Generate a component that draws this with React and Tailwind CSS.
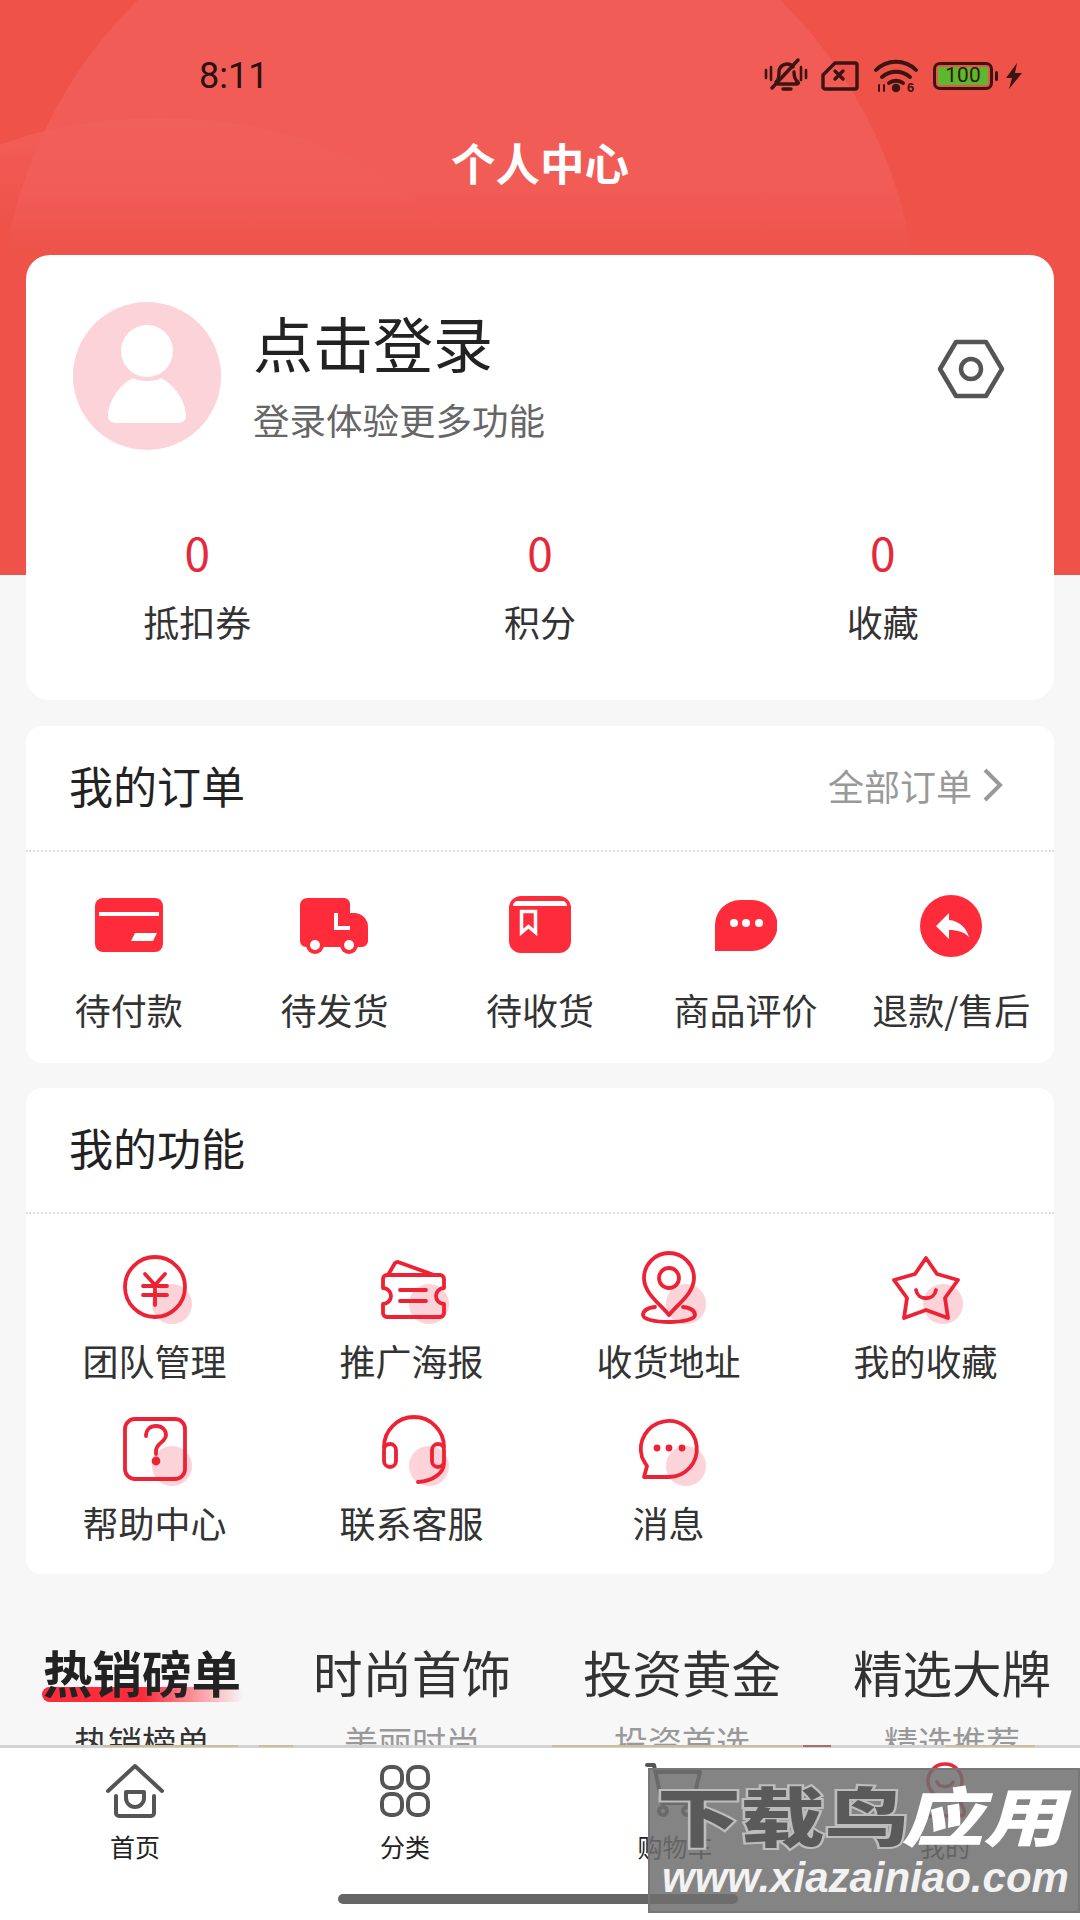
import React from 'react';

const RED = '#fe2b3b';
const LINE = '#ee2235';
const PINK = '#fbd3d8';

const stats = [
  { value: '0', label: '抵扣券' },
  { value: '0', label: '积分' },
  { value: '0', label: '收藏' },
];

const CardIcon = () => (
  <svg width="68" height="60" viewBox="0 0 68 60">
    <rect x="0" y="2" width="68" height="54" rx="8" fill={RED} />
    <rect x="4" y="16" width="60" height="4" fill="#fff" />
    <polygon points="40,37 62,37 58,45 36,45" fill="#fff" />
  </svg>
);

const TruckIcon = () => (
  <svg width="68" height="60" viewBox="0 0 68 60">
    <path d="M8 2h36a6 6 0 0 1 6 6v9h4a14 14 0 0 1 14 14v14a6 6 0 0 1-6 6H6a6 6 0 0 1-6-6V8a8 8 0 0 1 8-6z" fill={RED} />
    <circle cx="15" cy="49" r="9" fill={RED} />
    <circle cx="49" cy="49" r="9" fill={RED} />
    <circle cx="15" cy="49" r="5" fill="#fff" />
    <circle cx="49" cy="49" r="5" fill="#fff" />
    <path d="M36 17v15h14" fill="none" stroke="#fff" strokeWidth="4" />
  </svg>
);

const BookmarkIcon = () => (
  <svg width="62" height="60" viewBox="0 0 62 60">
    <rect x="0" y="0" width="62" height="57" rx="12" fill={RED} />
    <path d="M4 10c0-3 2-5 5-5h44c3 0 5 2 5 5z" fill="#fff" />
    <path d="M12.5 15.5h14v21l-7-6-7 6z" fill="none" stroke="#fff" strokeWidth="3.5" />
  </svg>
);

const BubbleIcon = () => (
  <svg width="62" height="60" viewBox="0 0 62 60">
    <path d="M0 55V29A25 25 0 0 1 25 4h12a25 25 0 0 1 0 51z" fill={RED} />
    <circle cx="19" cy="27" r="4" fill="#fff" />
    <circle cx="31" cy="27" r="4" fill="#fff" />
    <circle cx="44" cy="27" r="4" fill="#fff" />
  </svg>
);

const ReplyIcon = () => (
  <svg width="62" height="62" viewBox="0 0 62 62">
    <circle cx="31" cy="31" r="31" fill={RED} />
    <path d="M16 31l13-13v7c10 1 17 7 20 17-5-5-11-7-20-7v9z" fill="#fff" />
  </svg>
);

const orders = [
  { label: '待付款', icon: <CardIcon /> },
  { label: '待发货', icon: <TruckIcon /> },
  { label: '待收货', icon: <BookmarkIcon /> },
  { label: '商品评价', icon: <BubbleIcon /> },
  { label: '退款/售后', icon: <ReplyIcon /> },
];

// 功能图标统一 80x80，粉色圆点在右下
const FnIcon = ({ children }) => (
  <svg width="80" height="80" viewBox="0 0 80 80" fill="none" stroke={LINE} strokeWidth="3.8" strokeLinecap="round" strokeLinejoin="round">
    <circle cx="57" cy="57" r="20" fill={PINK} stroke="none" />
    {children}
  </svg>
);

const functions = [
  {
    label: '团队管理',
    icon: (
      <FnIcon>
        <circle cx="40" cy="40" r="30" />
        <path d="M30 27l10 11 10-11M28 39h24M28 48h24M40 38v20" />
      </FnIcon>
    ),
  },
  {
    label: '推广海报',
    icon: (
      <FnIcon>
        <path d="M16 28l7-12c1-1 2-1 3-1l36 13" />
        <path d="M15 28h53a4 4 0 0 1 4 4v9a8 8 0 0 0 0 16v9a4 4 0 0 1-4 4H15a4 4 0 0 1-4-4v-9a8 8 0 0 0 0-16v-9a4 4 0 0 1 4-4z" />
        <path d="M28 43h26M28 54h26" />
      </FnIcon>
    ),
  },
  {
    label: '收货地址',
    icon: (
      <FnIcon>
        <path d="M40 68C30 56 15 46 15 31a25 25 0 0 1 50 0c0 15-15 25-25 37z" />
        <circle cx="40" cy="31" r="10" />
        <path d="M26 60c-8 1-12 4-12 8 0 4 11 7 26 7s26-3 26-7c0-4-4-7-12-8" />
      </FnIcon>
    ),
  },
  {
    label: '我的收藏',
    icon: (
      <FnIcon>
        <path d="M40 11l11 16 21 6-13 18 3 20-22-8-22 8 3-20L8 33l21-6z" />
        <path d="M30 43c2 11 18 11 20 0" />
      </FnIcon>
    ),
  },
  {
    label: '帮助中心',
    icon: (
      <FnIcon>
        <rect x="10" y="10" width="60" height="60" rx="10" />
        <path d="M31 27c0-6 4-10 10-10s10 4 10 9c0 7-10 8-10 16v3" />
        <circle cx="41" cy="52" r="2.5" fill={LINE} />
      </FnIcon>
    ),
  },
  {
    label: '联系客服',
    icon: (
      <FnIcon>
        <path d="M12 38a30 30 0 0 1 60 0" />
        <rect x="12" y="35" width="12" height="23" rx="6" />
        <rect x="60" y="35" width="12" height="23" rx="6" />
        <path d="M72 54c0 10-11 18-26 19" />
      </FnIcon>
    ),
  },
  {
    label: '消息',
    icon: (
      <FnIcon>
        <path d="M15 68h25a28 28 0 1 0-27-20c1 3 3 6 5 9z" />
        <circle cx="28" cy="39" r="3.4" fill={LINE} stroke="none" />
        <circle cx="40" cy="39" r="3.4" fill={LINE} stroke="none" />
        <circle cx="53" cy="39" r="3.4" fill={LINE} stroke="none" />
      </FnIcon>
    ),
  },
];

const tabs = [
  { title: '热销磅单', sub: '热销榜单', active: true },
  { title: '时尚首饰', sub: '美丽时尚' },
  { title: '投资黄金', sub: '投资首选' },
  { title: '精选大牌', sub: '精选推荐' },
];

const StatusIcons = () => (
  <div className="flex items-center text-[#3a1512]">
    <svg width="44" height="36" viewBox="0 0 44 36" fill="none" stroke="currentColor" strokeWidth="3.4" strokeLinecap="round">
      <path d="M12 24c3-2 3-6 3-10 0-5 4-8 8-8 3 0 5 1 6 3M30 14c0 4 1 8 4 10 1 1 0 2-1 2H14" />
      <path d="M19 31h8" strokeWidth="3.4" />
      <path d="M34 2L8 30" />
      <path d="M2 12v8M7 9v13M37 9v13M42 12v8" strokeWidth="2.6" />
    </svg>
    <svg className="ml-[13px]" width="38" height="30" viewBox="0 0 38 30" fill="none" stroke="currentColor" strokeWidth="3.4" strokeLinejoin="round">
      <path d="M14 2h20a2 2 0 0 1 2 2v22a2 2 0 0 1-2 2H4a2 2 0 0 1-2-2V14z" />
      <path d="M14 10l8 8M22 10l-8 8" strokeWidth="3.4" strokeLinecap="round" />
    </svg>
    <svg className="ml-[15px]" width="44" height="40" viewBox="0 -3 44 40" fill="none" stroke="currentColor" strokeWidth="3.8" strokeLinecap="round">
      <path d="M2 11c11-11 29-11 40 0M8 18c8-7 20-7 28 0M15 24c4-3 10-3 14 0" />
      <circle cx="22" cy="29" r="2.4" fill="currentColor" />
      <path d="M5 26v6M10 26v6" strokeWidth="2" />
      <text x="33" y="33" fontSize="13" fontWeight="700" fill="currentColor" stroke="none" fontFamily="Liberation Sans, sans-serif">6</text>
    </svg>
    <div className="ml-[15px] flex items-center">
      <div className="flex h-[28px] w-[60px] items-center justify-center rounded-[7px] border-[3px] border-current p-[2px]">
        <div className="flex h-full w-full items-center justify-center bg-[#5ab92c] font-['Roboto',sans-serif] text-[21px] leading-none">100</div>
      </div>
      <div className="ml-[2px] h-[10px] w-[3px] rounded-sm bg-current" />
    </div>
    <svg className="ml-[7px]" width="18" height="26" viewBox="0 0 18 26">
      <path d="M12 0L1 15h6l-3 11 13-16h-7z" fill="currentColor" />
    </svg>
  </div>
);

export default function App() {
  return (
    <div className="relative h-[1920px] w-[1080px] overflow-hidden bg-[#f7f7f7] font-['Noto_Sans_CJK_SC','Noto_Sans',sans-serif]">
      {/* 顶部红色背景 */}
      <svg className="absolute left-0 top-0" width="1080" height="575" viewBox="0 0 1080 575">
        <defs>
          <linearGradient id="glow" gradientUnits="userSpaceOnUse" x1="0" y1="0" x2="0" y2="260">
            <stop offset="0" stopColor="#f15c56" />
            <stop offset="0.7" stopColor="#f15c56" />
            <stop offset="1" stopColor="#ee5249" />
          </linearGradient>
          <linearGradient id="glow2" gradientUnits="userSpaceOnUse" x1="0" y1="115" x2="0" y2="230">
            <stop offset="0" stopColor="#f2605a" />
            <stop offset="1" stopColor="#f15c56" stopOpacity="0" />
          </linearGradient>
        </defs>
        <rect width="1080" height="575" fill="#ee5249" />
        <circle cx="459" cy="328" r="459" fill="url(#glow)" />
        <ellipse cx="160" cy="290" rx="300" ry="172" fill="url(#glow2)" />
      </svg>

      <div className="relative flex flex-col">
        <div className="flex h-[100px] items-center justify-between pl-[199px] pr-[57px] pt-[51px]">
          <span className="font-['Roboto',sans-serif] text-[36px] text-[#2a1210]">8:11</span>
          <StatusIcons />
        </div>

        <h1 className="mt-[37px] mb-[68px] text-center text-[44.5px] font-bold leading-[50px] text-white">个人中心</h1>

        {/* 用户卡片 */}
        <section className="mx-[26px] h-[445px] rounded-[24px] bg-white">
          <div className="flex items-center pl-[47px] pr-[49px] pt-[47px]">
            <div className="h-[148px] w-[148px] shrink-0">
              <svg width="148" height="148" viewBox="0 0 148 148">
                <circle cx="74" cy="74" r="74" fill="#fcd3d8" />
                <circle cx="74" cy="49" r="26" fill="#fff" />
                <path d="M60 76c4 4 24 4 28 0 14 7 25 24 25 38 0 4-3 7-8 7H43c-5 0-8-3-8-7 0-14 11-31 25-38z" fill="#fff" />
              </svg>
            </div>
            <div className="ml-[32px] mb-[5px] flex flex-1 flex-col gap-[18px]">
              <div className="text-[60px] leading-[74px] text-[#222]">点击登录</div>
              <div className="text-[36.5px] leading-[46px] text-[#666]">登录体验更多功能</div>
            </div>
            <svg className="mb-[14px]" width="68" height="60" viewBox="0 0 68 60" fill="none" stroke="#555" strokeWidth="4.5" strokeLinejoin="round">
              <path d="M19 3h30l16 27-16 27H19L3 30z" />
              <circle cx="34" cy="30" r="10" />
            </svg>
          </div>
          <div className="mt-[75px] grid grid-cols-3">
            {stats.map((item) => (
              <div key={item.label} className="flex flex-col items-center gap-[21px]">
                <span className="text-[46px] leading-[52px] text-[#e5283a]">{item.value}</span>
                <span className="text-[36px] leading-[46px] text-[#333]">{item.label}</span>
              </div>
            ))}
          </div>
        </section>

        {/* 我的订单 */}
        <section className="mx-[26px] mt-[26px] h-[337px] rounded-[16px] bg-white">
          <div className="flex h-[126px] items-center justify-between border-b-2 border-dotted border-[#ddd] pb-[6px] pl-[43px] pr-[50px]">
            <span className="text-[44px] text-[#222]">我的订单</span>
            <span className="flex items-center gap-[10px] text-[36px] text-[#999]">
              全部订单
              <svg width="22" height="34" viewBox="0 0 22 34" fill="none" stroke="#999" strokeWidth="4">
                <path d="M3 2l15 15L3 32" />
              </svg>
            </span>
          </div>
          <div className="grid grid-cols-5 pt-[44px]">
            {orders.map((item) => (
              <div key={item.label} className="flex flex-col items-center gap-[30px]">
                <div className="flex h-[60px] items-center justify-center">{item.icon}</div>
                <span className="whitespace-nowrap text-[36px] leading-[46px] text-[#333]">{item.label}</span>
              </div>
            ))}
          </div>
        </section>

        {/* 我的功能 */}
        <section className="mx-[26px] mt-[25px] h-[486px] rounded-[16px] bg-white">
          <div className="flex h-[126px] items-center border-b-2 border-dotted border-[#ddd] pb-[6px] pl-[43px]">
            <span className="text-[44px] text-[#222]">我的功能</span>
          </div>
          <div className="grid grid-cols-4 gap-y-[26px] pt-[33px]">
            {functions.map((item) => (
              <div key={item.label} className="flex flex-col items-center gap-[10px]">
                {item.icon}
                <span className="text-[36px] leading-[46px] text-[#333]">{item.label}</span>
              </div>
            ))}
          </div>
        </section>

        {/* 分类标签 */}
        <div className="ml-[7px] mt-[68px] grid w-[1080px] grid-cols-4">
          {tabs.map((tab) => (
            <div key={tab.title} className="relative flex flex-col items-center gap-[20px]">
              {tab.active && (
                <div className="absolute left-[35px] top-[45px] h-[15px] w-[202px] rounded-full bg-gradient-to-r from-[#fe2b3b] via-[#fe2b3b] to-transparent" />
              )}
              <span className={`relative text-[49.5px] leading-[60px] ${tab.active ? 'font-bold text-[#222]' : 'text-[#333]'}`}>{tab.title}</span>
              <span className={`text-[34px] leading-[40px] ${tab.active ? 'text-[#333]' : 'text-[#999]'}`}>{tab.sub}</span>
            </div>
          ))}
        </div>
      </div>

      {/* 底部导航 */}
      <nav className="absolute inset-x-0 bottom-0 h-[175px] border-t-[3px] border-[#d2d2d2] bg-white">
        {/* 导航上沿露出的商品图 */}
        <div className="absolute -top-[3px] left-[103px] h-[2px] w-[135px] bg-[#c9b36a]/60" />
        <div className="absolute -top-[3px] left-[259px] h-[2px] w-[34px] bg-[#c9b36a]/60" />
        <div className="absolute -top-[3px] left-[552px] h-[2px] w-[250px] bg-[#c9b36a]/60" />
        <div className="absolute -top-[3px] left-[803px] h-[2px] w-[28px] bg-[#8a2a2a]/60" />
        <div className="absolute -top-[3px] left-[945px] h-[2px] w-[90px] bg-[#c9b36a]/60" />
        <div className="grid grid-cols-4 pt-[12px]">
          <div className="flex flex-col items-center gap-[10px]">
            <svg width="60" height="60" viewBox="0 0 60 60" fill="none" stroke="#555" strokeWidth="4" strokeLinecap="round" strokeLinejoin="round">
              <path d="M3 31L30 6l27 25" />
              <path d="M11 36v17a3 3 0 0 0 3 3h32a3 3 0 0 0 3-3V36" />
              <path d="M21 32h18v6a9 9 0 0 1-18 0z" />
            </svg>
            <span className="text-[25px] leading-[32px] text-[#222]">首页</span>
          </div>
          <div className="flex flex-col items-center gap-[10px]">
            <svg width="60" height="60" viewBox="0 0 60 60" fill="none" stroke="#555" strokeWidth="4">
              <rect x="7" y="7" width="20" height="21" rx="8" />
              <rect x="33" y="7" width="20" height="21" rx="8" />
              <rect x="7" y="34" width="20" height="21" rx="8" />
              <rect x="33" y="34" width="20" height="21" rx="8" />
            </svg>
            <span className="text-[25px] leading-[32px] text-[#222]">分类</span>
          </div>
          <div className="flex flex-col items-center gap-[10px]">
            <svg width="60" height="60" viewBox="0 0 60 60" fill="none" stroke="#555" strokeWidth="4" strokeLinecap="round" strokeLinejoin="round">
              <path d="M2 5h7l8 38h32" />
              <path d="M11 12h44l-6 25H17" />
              <circle cx="18" cy="51" r="4" />
              <circle cx="42" cy="51" r="4" />
            </svg>
            <span className="text-[25px] leading-[32px] text-[#222]">购物车</span>
          </div>
          <div className="flex flex-col items-center gap-[10px]">
            <svg width="60" height="60" viewBox="0 0 60 60" fill="none" stroke="#e8283a" strokeWidth="3.5" strokeLinecap="round">
              <circle cx="30" cy="21" r="17" />
              <path d="M22 22c2 6 14 6 16 0" />
              <path d="M18 34L11 50c-1 3 0 6 4 6h30c4 0 5-3 4-6l-7-16" />
            </svg>
            <span className="text-[25px] leading-[32px] text-[#222]">我的</span>
          </div>
        </div>
        <div className="absolute bottom-[16px] left-[338px] h-[10px] w-[400px] rounded-full bg-[#666]" />
      </nav>

      {/* 水印 */}
      <div className="absolute left-[648px] top-[1768px] h-[145px] w-[432px] overflow-hidden border-2 border-[#777] bg-[#6e6e6e]/85">
        <div className="flex h-[82px] items-center pl-[7px] pt-[4px]">
          <span className="inline-block w-[252px] origin-left scale-x-[1.31] whitespace-nowrap text-[64px] font-black leading-[64px] text-[#5a5a5a] [-webkit-text-stroke:4px_#bdbdbd] [paint-order:stroke_fill]">下载鸟</span>
          <span className="inline-block origin-left -skew-x-12 scale-x-[1.28] whitespace-nowrap text-[64px] font-black leading-[64px] text-white">应用</span>
        </div>
        <div className="pl-[12px] pt-[8px] font-['Liberation_Sans',sans-serif] text-[42px] font-bold italic leading-[36px] text-[#f2f2f2]">www.xiazainiao.com</div>
      </div>
    </div>
  );
}
